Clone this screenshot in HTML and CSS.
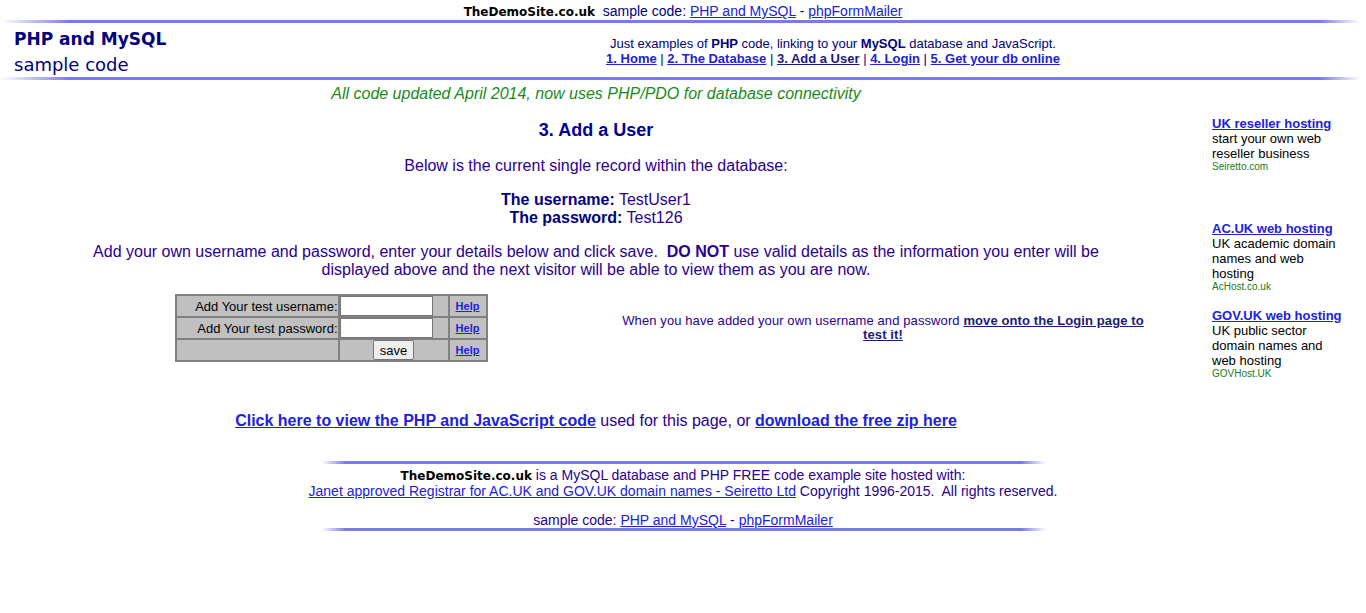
FILE: index.html
```html
<!DOCTYPE html>
<html>
<head>
<meta charset="utf-8">
<title>PHP and MySQL sample code - Add a User</title>
<link rel="stylesheet" href="styles.css">
</head>
<body>
<div class="topbar"><span class="brand">TheDemoSite.co.uk</span>&nbsp; sample code: <a href="#">PHP and MySQL</a> - <a href="#">phpFormMailer</a></div>
<div class="rule"></div>
<div class="header">
  <div class="logo">
    <div class="logo-title">PHP and MySQL</div>
    <div class="logo-sub">sample code</div>
  </div>
  <div class="nav">
    <div>Just examples of <b>PHP</b> code, linking to your <b>MySQL</b> database and JavaScript.</div>
    <div><a href="#">1. Home</a> | <a href="#">2. The Database</a> | <a href="#" class="current">3. Add a User</a> | <a href="#">4. Login</a> | <a href="#">5. Get your db online</a></div>
  </div>
</div>
<div class="rule"></div>
<div class="page">
  <div class="main">
    <p class="notice">All code updated April 2014, now uses PHP/PDO for database connectivity</p>
    <h1 class="title">3. Add a User</h1>
    <p class="lead">Below is the current single record within the database:</p>
    <p class="record"><b>The username:</b> TestUser1<br><b>The password:</b> Test126</p>
    <p class="lead wide">Add your own username and password, enter your details below and click save.&nbsp; <b>DO NOT</b> use valid details as the information you enter will be displayed above and the next visitor will be able to view them as you are now.</p>
    <div class="form-row">
      <div class="form-cell">
        <table class="form-table">
          <tr>
            <td class="lbl">Add Your test username:</td>
            <td class="fld"><input type="text" class="txt"></td>
            <td class="hlp"><a href="#">Help</a></td>
          </tr>
          <tr>
            <td class="lbl">Add Your test password:</td>
            <td class="fld"><input type="password" class="txt"></td>
            <td class="hlp"><a href="#">Help</a></td>
          </tr>
          <tr>
            <td class="lbl"></td>
            <td class="fld center"><button class="save">save</button></td>
            <td class="hlp"><a href="#">Help</a></td>
          </tr>
        </table>
      </div>
      <div class="next-cell">When you have added your own username and password <a href="#" class="strong-link">move onto the Login page to test it!</a></div>
    </div>
    <p class="code-links"><a href="#">Click here to view the PHP and JavaScript code</a> used for this page, or <a href="#">download the free zip here</a></p>
  </div>
  <div class="side">
    <div class="ad">
      <a href="#">UK reseller hosting</a>
      <div class="ad-text">start your own web reseller business</div>
      <div class="ad-url">Seiretto.com</div>
    </div>
    <div class="ad ad-gap">
      <a href="#">AC.UK web hosting</a>
      <div class="ad-text">UK academic domain names and web hosting</div>
      <div class="ad-url">AcHost.co.uk</div>
    </div>
    <div class="ad">
      <a href="#">GOV.UK web hosting</a>
      <div class="ad-text">UK public sector domain names and web hosting</div>
      <div class="ad-url">GOVHost.UK</div>
    </div>
  </div>
</div>
<div class="footer">
  <div class="frule"></div>
  <div class="ftext">
    <div><span class="brand">TheDemoSite.co.uk</span> is a MySQL database and PHP FREE code example site hosted with:</div>
    <div><a href="#">Janet approved Registrar for AC.UK and GOV.UK domain names - Seiretto Ltd</a> Copyright 1996-2015.&nbsp; All rights reserved.</div>
    <div class="fsample">sample code: <a href="#">PHP and MySQL</a> - <a href="#">phpFormMailer</a></div>
  </div>
  <div class="frule"></div>
</div>
</body>
</html>
```

FILE: styles.css
```css
body {
  margin: 0;
  font-family: "Liberation Sans", Arial, sans-serif;
  color: #000080;
  background: #fff;
}
a { color: #2020e0; }
.brand {
  font-family: "Comic Sans MS", "DejaVu Sans", sans-serif;
  font-weight: bold;
  color: #000;
  font-size: 12px;
  line-height: 1;
}
.topbar {
  text-align: center;
  font-size: 14px;
  line-height: 16px;
  padding-top: 3px;
  height: 16px;
}
.rule {
  height: 3px;
  margin-top: 1px;
  background: linear-gradient(to right, rgba(110,110,230,0) 0, #7a7ae8 70px, #7a7ae8 1320px, rgba(110,110,230,0) 1360px);
}
.header {
  display: grid;
  grid-template-columns: 300px 1fr;
  height: 53px;
}
.logo { padding: 3px 0 0 14px; color: #000080; }
.logo-title {
  font-family: "Comic Sans MS", "DejaVu Sans", sans-serif;
  font-weight: bold;
  font-size: 17px;
  line-height: 26px;
}
.logo-sub {
  font-family: "Comic Sans MS", "DejaVu Sans", sans-serif;
  font-size: 18px;
  line-height: 26px;
}
.nav {
  text-align: center;
  font-size: 13px;
  line-height: 15px;
  padding-top: 13px;
}
.nav a { font-weight: bold; color: #2020d8; }
.nav a.current { color: #1a1a80; }
.page {
  display: grid;
  grid-template-columns: 1fr 134px;
  column-gap: 28px;
  padding: 0 20px 0 8px;
}
.main { text-align: center; color: #2a0090; }
.main p { margin: 0; }
.notice {
  color: #1a8a1a;
  font-style: italic;
  font-size: 16px;
  line-height: 18px;
  padding-top: 5px;
}
.title {
  color: #000099;
  font-size: 18px;
  line-height: 22px;
  margin: 16px 0 0;
}
.lead { font-size: 16px; line-height: 18px; }
.wide { max-width: 1020px; margin-left: auto !important; margin-right: auto !important; }
.title + .lead { margin-top: 16px !important; }
.record {
  font-size: 16px;
  line-height: 18px;
  margin-top: 16px !important;
}
.record b { color: #000080; }
.record + .lead { margin-top: 16px !important; }
.form-row {
  display: grid;
  grid-template-columns: 574px 530px;
  justify-content: center;
  align-items: center;
  margin-top: 15px;
}
.form-cell { display: flex; justify-content: center; }
.form-table {
  border-collapse: separate;
  border-spacing: 0;
  background: #c0c0c0;
  border: 1px solid #808080;
  font-size: 13px;
  color: #000;
}
.form-table td {
  border: 1px solid #808080;
  height: 20px;
  padding: 0;
}
.form-table td.lbl { width: 161px; text-align: right; }
.form-table td.fld { width: 108px; text-align: left; }
.form-table td.fld.center { text-align: center; }
.form-table td.hlp { width: 36px; text-align: center; font-size: 11px; font-weight: bold; }
.txt {
  box-sizing: border-box;
  width: 93px;
  height: 20px;
  border: 1px solid #767676;
  margin: 0;
  padding: 0 2px;
  display: block;
  background: #fff;
}
.save {
  font-family: "Liberation Sans", Arial, sans-serif;
  font-size: 13px;
  height: 20px;
  padding: 0 6px;
  margin: 0;
  background: #efefef;
  border: 1px solid #767676;
  border-radius: 2px;
  color: #000;
}
.next-cell {
  font-size: 13px;
  line-height: 14px;
  color: #2a0090;
  letter-spacing: 0.1px;
}
.strong-link { font-weight: bold; color: #1a1a80; }
.code-links {
  font-size: 16px;
  line-height: 18px;
  margin-top: 50px !important;
}
.code-links a { font-weight: bold; }
.side { padding-top: 36px; }
.ad { font-size: 13px; line-height: 15px; color: #000; margin-bottom: 15px; }
.ad a { font-weight: bold; }
.ad-url { font-size: 10px; line-height: 12px; color: #1a7a1a; }
.ad-gap { margin-top: 48px; }
.footer {
  width: 725px;
  margin: 31px auto 0;
}
.frule {
  height: 3px;
  background: linear-gradient(to right, rgba(110,110,230,0) 0, #7a7ae8 25px, #7a7ae8 700px, rgba(110,110,230,0) 725px);
}
.ftext {
  text-align: center;
  font-size: 14px;
  line-height: 16px;
  color: #2a0090;
  padding: 3px 0 0;
  margin: 0 -40px;
}
.fsample { margin-top: 13px; }
```
